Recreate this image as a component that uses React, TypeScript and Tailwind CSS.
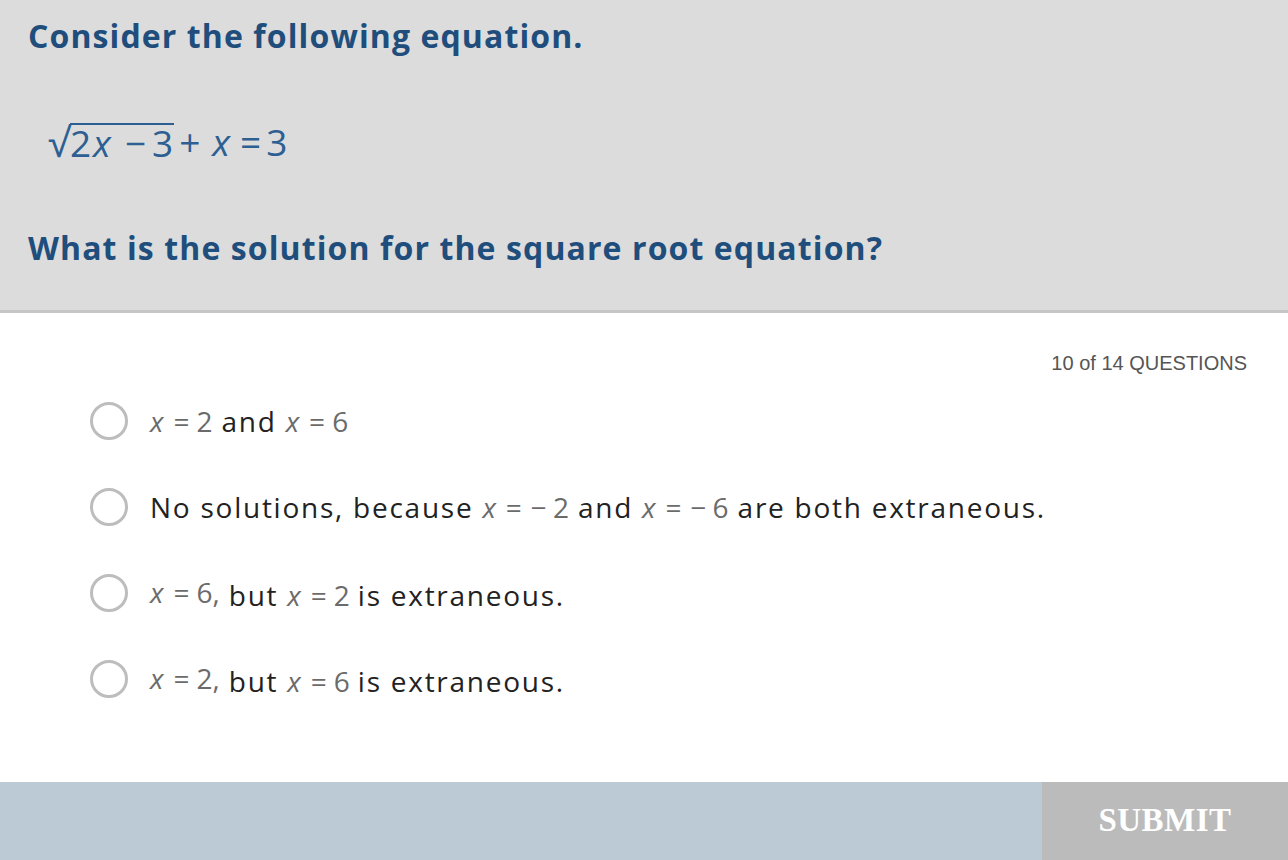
import React from 'react';

// math run, spaced like the MathType images in the reference
const M: React.FC<{ children: React.ReactNode; raise?: boolean }> = ({ children, raise }) => (
    <span
        className={`inline-flex items-baseline text-[28px] text-[#6b6b6b] font-['Open_Sans',sans-serif] tracking-normal ${raise ? 'align-[3px]' : ''}`}
    >
        {children}
    </span>
);

const X = () => <span className="italic">x</span>;
const Eq = ({ neg }: { neg?: boolean }) => (
    <>
        <span className="ml-[10px] mr-[7px]">=</span>
        {neg && <span className="ml-[2px] mr-[6px]">−</span>}
    </>
);

const answers: React.ReactNode[] = [
    <>
        <M><X /><Eq />2</M> and <M><X /><Eq />6</M>
    </>,
    <>
        No solutions, because <M><X /><Eq neg />2</M> and <M><X /><Eq neg />6</M> are both extraneous.
    </>,
    <>
        <M raise><X /><Eq />6,</M> but <M><X /><Eq />2</M><span className="ml-[8px]">is extraneous.</span>
    </>,
    <>
        <M raise><X /><Eq />2,</M> but <M><X /><Eq />6</M><span className="ml-[8px]">is extraneous.</span>
    </>,
];

export default function App() {
    return (
        <div className="w-[1288px] h-[860px] flex flex-col bg-white overflow-hidden">
            {/* question header */}
            <div className="h-[313px] bg-[#dcdcdc] border-b-[3px] border-[#c6c6c6] px-[28px] pt-[14px] flex flex-col font-['Open_Sans',sans-serif] font-bold text-[#1f4e7d] tracking-[1.1px]">
                <h1 className="text-[32px] leading-[44px]">Consider the following equation.</h1>
                <div className="mt-[62px] ml-[20px] flex items-center text-[37px] leading-[44px] font-normal text-[#2d5f92] font-['Open_Sans',sans-serif] tracking-normal">
                    <span className="text-[40px] leading-none">√</span>
                    <span className="border-t-2 border-[#2d5f92] leading-[36px] pr-[1px] flex">
                        <span>2</span>
                        <span className="italic ml-[2px]">x</span>
                        <span className="ml-[14px]">−</span>
                        <span className="ml-[6px]">3</span>
                    </span>
                    <span className="ml-[5px]">+</span>
                    <span className="italic ml-[12px]">x</span>
                    <span className="ml-[10px]">=</span>
                    <span className="ml-[5px]">3</span>
                </div>
                <h2 className="mt-[62px] text-[32px] leading-[44px]">What is the solution for the square root equation?</h2>
            </div>

            {/* answers */}
            <div className="flex-1 flex flex-col">
                <div className="flex justify-end pr-[41px] pt-[35px] text-[20px] text-[#555] font-['Liberation_Sans',sans-serif]">
                    10 of 14 QUESTIONS
                </div>
                <div className="flex flex-col gap-[48px] pl-[90px] pt-[24px] font-['Open_Sans',sans-serif] text-[28px] text-[#222] tracking-[1.75px]">
                    {answers.map((a, i) => (
                        <label key={i} className="flex items-center gap-[22px] h-[38px]">
                            <span className="w-[38px] h-[38px] rounded-full border-[3px] border-[#bdbdbd] shrink-0" />
                            <span className="whitespace-nowrap">{a}</span>
                        </label>
                    ))}
                </div>
            </div>

            {/* footer */}
            <div className="h-[78px] bg-[#bccad5] flex justify-end">
                <button className="w-[246px] h-full bg-[#bbbbbb] text-white text-[33px] font-bold tracking-[0.5px] font-['Liberation_Serif',serif]">
                    SUBMIT
                </button>
            </div>
        </div>
    );
}
